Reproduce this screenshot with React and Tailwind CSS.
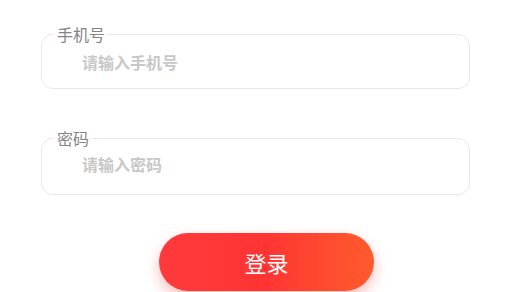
import React, { useState } from 'react';

export default function App() {
    const [phone, setPhone] = useState('');
    const [password, setPassword] = useState('');

    return (
        <div className="w-[527px] h-[292px] overflow-hidden bg-white font-['Noto_Sans_CJK_SC','Noto_Sans',sans-serif]">
            <div className="ml-[41px] w-[429px] pt-[24px] flex flex-col">
                {/* Phone field */}
                <fieldset className="border border-[#e8e8e8] rounded-[12px] pb-[8px]">
                    <legend className="ml-[12px] px-[3px] text-[16px] leading-[20px] text-[#858585]">手机号</legend>
                    <input
                        type="text"
                        value={phone}
                        onChange={(e) => setPhone(e.target.value)}
                        placeholder="请输入手机号"
                        className="w-full h-[36px] pl-[40px] pr-4 bg-transparent outline-none text-[16px] font-bold text-[#333] placeholder:text-[#c8c8c8]"
                    />
                </fieldset>

                {/* Password field */}
                <fieldset className="mt-[39px] border border-[#e8e8e8] rounded-[12px] pb-[14px]">
                    <legend className="ml-[12px] px-[3px] text-[16px] leading-[20px] text-[#858585]">密码</legend>
                    <input
                        type="password"
                        value={password}
                        onChange={(e) => setPassword(e.target.value)}
                        placeholder="请输入密码"
                        className="w-full h-[32px] pl-[40px] pr-4 bg-transparent outline-none text-[16px] font-bold text-[#333] placeholder:text-[#c8c8c8]"
                    />
                </fieldset>
            </div>

            {/* Submit */}
            <div className="flex mt-[38px] pl-[159px]">
                <button
                    type="button"
                    className="w-[215px] h-[58px] rounded-full bg-gradient-to-r from-[#ff3a3c] via-[#ff3433] to-[#ff5a2c] text-white text-[22px] leading-none shadow-[0_6px_14px_rgba(255,60,50,0.35)]"
                >
                    登录
                </button>
            </div>
        </div>
    );
}
